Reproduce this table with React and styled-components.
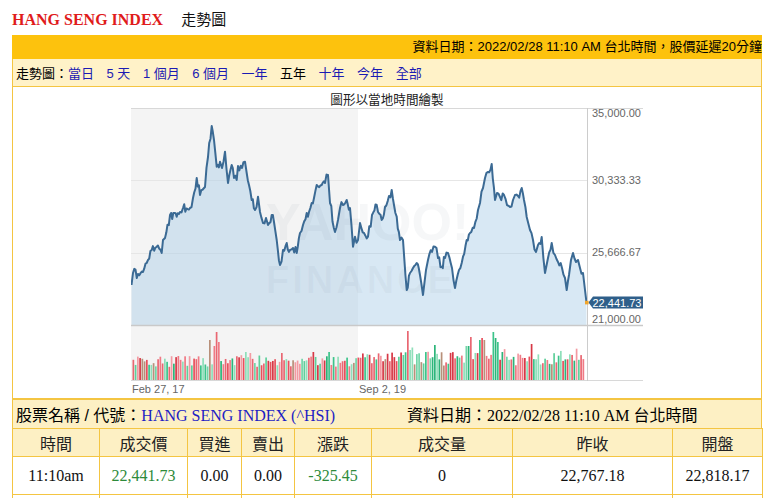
import React from 'react';
import styled, { createGlobalStyle } from 'styled-components';

const SANS = `"Liberation Sans", Arial, "Noto Sans CJK TC", sans-serif`;
const SERIF = `"Liberation Serif", "Times New Roman", "Noto Sans CJK TC", serif`;
const YELLOW = '#f4c542';

const GlobalStyle = createGlobalStyle`
  html, body { margin: 0; padding: 0; background: #fff; }
  body { font-family: ${SANS}; color: #000; }
  #root { width: 768px; height: 498px; overflow: hidden; }
`;

const Page = styled.div`
  padding: 10px 0 0 12px;
  width: 750px;
`;

const TitleRow = styled.div`
  display: flex;
  align-items: baseline;
  gap: 18px;
  height: 25px;
`;

const Title = styled.span`
  font-family: ${SERIF};
  font-weight: bold;
  font-size: 16px;
  line-height: 20px;
  color: #e01b1b;
`;

const Subtitle = styled.span`
  font-size: 15px;
  line-height: 20px;
  color: #111;
`;

const Panel = styled.div`
  width: 750px;
`;

const TopBar = styled.div`
  height: 24px;
  line-height: 24px;
  background: #fdc20d;
  text-align: right;
  font-size: 13px;
  white-space: nowrap;
  overflow: hidden;
`;

const Toolbar = styled.div`
  display: flex;
  align-items: center;
  height: 27px;
  background: #fff2c8;
  border: 1px solid ${YELLOW};
  border-top: none;
  padding-left: 3px;
  font-size: 13px;
  gap: 12.5px;
`;

const ToolLabel = styled.span`
  color: #000;
  margin-right: -12.5px;
`;

const ToolLink = styled.a`
  color: ${(p) => (p.$active ? '#000' : '#1b1bb3')};
  text-decoration: none;
  white-space: pre;
`;

const ChartArea = styled.div`
  display: flex;
  justify-content: center;
  background: #fff;
  border-left: 1px solid ${YELLOW};
  border-right: 1px solid ${YELLOW};
  border-bottom: 2px solid ${YELLOW};
  padding-top: 3px;
  height: 308px;
`;

const InfoRow = styled.div`
  display: grid;
  grid-template-columns: 391px 1fr;
  align-items: center;
  height: 28px;
  background: #fdf0c4;
  border-left: 1px solid ${YELLOW};
  border-right: 1px solid ${YELLOW};
  font-size: 16px;
  white-space: nowrap;
`;

const InfoCell = styled.div`
  padding-left: ${(p) => p.$pad || 3}px;
`;

const SerifBlue = styled.span`
  font-family: ${SERIF};
  color: #1e1ec4;
`;

const SerifText = styled.span`
  font-family: ${SERIF};
`;

const Table = styled.table`
  width: 750px;
  border-collapse: collapse;
  table-layout: fixed;
`;

const Th = styled.th`
  border: 1px solid ${YELLOW};
  background: #fdf0c4;
  font-weight: normal;
  font-size: 16px;
  height: 27px;
  padding: 0;
  color: #222;
  text-align: center;
`;

const Td = styled.td`
  border: 1px solid ${YELLOW};
  background: #fff;
  font-family: ${SERIF};
  font-size: 16px;
  height: ${(p) => p.$h || 37}px;
  padding: 0;
  text-align: center;
  color: ${(p) => (p.$green ? '#2d8a3a' : '#111')};
`;

/* ---------------- chart data ---------------- */

function makeRng(seed) {
  let a = seed;
  return () => {
    a |= 0;
    a = (a + 0x6d2b79f5) | 0;
    let t = Math.imul(a ^ (a >>> 15), 1 | a);
    t = (t + Math.imul(t ^ (t >>> 7), 61 | t)) ^ t;
    return ((t ^ (t >>> 14)) >>> 0) / 4294967296;
  };
}

const KEY = [
  [131.5, 285], [133, 273], [138, 274], [143, 272], [146.7, 263], [151.7, 250], [156.7, 246.7],
  [161.7, 253], [163, 240], [165, 238], [170, 215], [176.7, 216.7], [180, 212], [183, 208],
  [190, 208], [193, 198], [196.7, 178], [200, 195], [205, 187], [208, 157], [211.7, 126],
  [214, 140], [216.7, 166.7], [220, 161.7], [222, 168], [225, 151.7], [228, 183], [231.7, 165],
  [234, 178], [236.7, 180], [238, 166], [242, 168], [245, 161.7], [246.7, 173], [249, 185],
  [251.7, 200], [255, 210], [258, 196.7], [260, 212], [263, 223], [266, 218], [268, 225],
  [271.7, 215], [274, 222], [276.7, 240], [280, 265], [283, 250], [286.7, 243], [290, 250],
  [293, 248], [296.7, 253], [300, 233], [303, 225], [306.7, 213], [309, 212], [311.7, 203],
  [314, 198], [316.7, 185], [321.7, 185], [325, 183], [328, 175], [330, 203], [335, 232],
  [338, 220], [340, 208], [343, 205], [346.7, 200], [350, 208], [353, 246.7], [355, 236.7],
  [358, 240], [360, 223], [364, 233], [368, 236.7], [372, 215], [376.7, 205], [378, 212],
  [381.7, 220], [385, 207], [389, 196], [391.7, 190], [394, 205], [396.7, 216.7], [400, 240],
  [403, 240], [406.7, 290], [410, 273], [413, 268], [416.7, 263], [420, 275], [423, 295],
  [426, 270], [428, 260], [432, 252], [435, 246.7], [438, 258], [441.7, 266.7], [445, 258],
  [448, 253], [452, 268], [455, 288], [459, 270], [463, 256.7], [466.7, 240], [470, 233],
  [474, 228], [478, 210], [480, 203], [483, 188], [485, 178], [488, 172], [491.7, 164],
  [495, 200], [497, 193], [500, 197], [504, 195], [507, 205], [510, 207], [513, 200],
  [515, 195], [518, 196], [521.7, 188], [524, 200], [526.7, 217], [530, 230], [533, 240],
  [536, 252], [538, 245], [541.7, 237], [545, 273], [548, 258], [551.7, 243], [555, 255],
  [558, 262], [562, 268], [565, 278], [566.7, 290], [569, 275], [571, 260], [573, 253],
  [576, 262], [578, 260], [580, 268], [583, 273], [585, 290], [586.5, 302.7],
];

function buildLine() {
  const r = makeRng(7);
  const pts = [];
  for (let i = 0; i < KEY.length; i++) {
    const [x, y] = KEY[i];
    pts.push([x, y]);
    if (i < KEY.length - 1) {
      const [x2, y2] = KEY[i + 1];
      const dx = x2 - x;
      const n = Math.floor(dx / 1.1);
      for (let k = 1; k < n; k++) {
        const t = k / n;
        pts.push([x + dx * t, y + (y2 - y) * t + (r() - 0.5) * 9]);
      }
    }
  }
  return pts;
}

const LINE = buildLine();
const LINE_D = LINE.map((p, i) => `${i ? 'L' : 'M'}${p[0].toFixed(1)},${p[1].toFixed(1)}`).join(' ');
const AREA_D = `${LINE_D} L586.5,325 L131.5,325 Z`;

const SPIKES = [
  [210, 40], [213, 34], [215.7, 48], [218, 38], [244, 28], [250, 27], [281.7, 27], [311.7, 28],
  [328, 28], [403, 25], [406.7, 49], [409, 30], [434, 35], [466.7, 34], [470, 43], [478, 40],
  [481.7, 42], [484, 40], [491.7, 48], [494, 42], [496, 38], [530, 36], [560, 26], [575, 24],
];

const REDS = ['#e8505c', '#f07a85', '#d73846', '#e96772', '#f39aa2'];
const GREENS = ['#3cc48a', '#72d6a8', '#2cb57a', '#5fcf9b', '#8fdfba'];

function buildBars() {
  const r = makeRng(42);
  const bars = [];
  for (let x = 132.5; x <= 584.5; x += 2.25) {
    let h = 13 + r() * 12;
    if (x > 360) h += r() * 8;
    for (const [sx, sh] of SPIKES) {
      if (Math.abs(sx - x) < 1.2) h = Math.max(h, sh);
    }
    const red = r() < 0.52;
    const pal = red ? REDS : GREENS;
    const c = r() < 0.06 ? '#b8907a' : pal[Math.floor(r() * pal.length)];
    bars.push({ x, h, c });
  }
  return bars;
}

const BARS = buildBars();

const ChartSvg = styled.svg`
  display: block;
  font-family: ${SANS};
`;

function Chart() {
  return (
    <ChartSvg width="512" height="306" viewBox="131 90 512 306">
      <text x="387" y="104" fontSize="12.6" textAnchor="middle" fill="#222">圖形以當地時間繪製</text>
      <rect x="131" y="108" width="227" height="272" fill="#f4f4f4" />
      <line x1="131" y1="108.5" x2="643" y2="108.5" stroke="#d8d8d8" />
      <line x1="131" y1="180.5" x2="587" y2="180.5" stroke="#e6e6e6" />
      <line x1="131" y1="253.5" x2="587" y2="253.5" stroke="#e6e6e6" />
      <path d={AREA_D} fill="#a9cbe6" fillOpacity="0.45" />
      <g fill="#6a7f90" fillOpacity="0.06" fontWeight="bold">
        <text x="266" y="240" fontSize="52">YAHOO!</text>
        <text x="266" y="293" fontSize="38" letterSpacing="3">FINANCE</text>
      </g>
      <path d={LINE_D} fill="none" stroke="#3b6a94" strokeWidth="2" strokeLinejoin="round" />
      <line x1="131" y1="325.5" x2="643" y2="325.5" stroke="#c9c9c9" strokeWidth="1.5" />
      {BARS.map((b, i) => (
        <rect key={i} x={b.x} y={380 - b.h} width="1.7" height={b.h} fill={b.c} />
      ))}
      <line x1="131" y1="380.5" x2="643" y2="380.5" stroke="#d8d8d8" />
      <line x1="587.5" y1="108" x2="587.5" y2="381" stroke="#cccccc" />
      <g fontSize="11" fill="#666">
        <text x="592" y="117">35,000.00</text>
        <text x="592" y="184">30,333.33</text>
        <text x="592" y="256">25,666.67</text>
        <text x="592" y="323">21,000.00</text>
        <text x="132" y="393">Feb 27, 17</text>
        <text x="359" y="393">Sep 2, 19</text>
      </g>
      <path d="M588.5,302.5 L593,296.5 L643,296.5 L643,308.5 L593,308.5 Z" fill="#2f5f8a" />
      <text x="592.5" y="306.5" fontSize="11" fill="#fff">22,441.73</text>
      <rect x="585" y="300.8" width="3.6" height="3.6" fill="#f0a52c" />
    </ChartSvg>
  );
}

const LINKS = [
  { t: '當日' },
  { t: '5 天' },
  { t: '1 個月' },
  { t: '6 個月' },
  { t: '一年' },
  { t: '五年', active: true },
  { t: '十年' },
  { t: '今年' },
  { t: '全部' },
];

const COLS = [87, 88, 54, 53, 77, 141, 160, 90];

export default function App() {
  return (
    <>
      <GlobalStyle />
      <Page>
        <TitleRow>
          <Title>HANG SENG INDEX</Title>
          <Subtitle>走勢圖</Subtitle>
        </TitleRow>
        <Panel>
          <TopBar>資料日期：2022/02/28 11:10 AM 台北時間，股價延遲20分鐘</TopBar>
          <Toolbar>
            <ToolLabel>走勢圖：</ToolLabel>
            {LINKS.map((l) => (
              <ToolLink key={l.t} href="#" $active={l.active}>{l.t}</ToolLink>
            ))}
          </Toolbar>
          <ChartArea>
            <Chart />
          </ChartArea>
          <InfoRow>
            <InfoCell>
              股票名稱 / 代號：<SerifBlue>HANG SENG INDEX (^HSI)</SerifBlue>
            </InfoCell>
            <InfoCell $pad={3}>
              資料日期：<SerifText>2022/02/28 11:10 AM </SerifText>台北時間
            </InfoCell>
          </InfoRow>
          <Table>
            <colgroup>
              {COLS.map((w, i) => <col key={i} style={{ width: w }} />)}
            </colgroup>
            <thead>
              <tr>
                <Th>時間</Th>
                <Th>成交價</Th>
                <Th>買進</Th>
                <Th>賣出</Th>
                <Th>漲跌</Th>
                <Th>成交量</Th>
                <Th>昨收</Th>
                <Th>開盤</Th>
              </tr>
            </thead>
            <tbody>
              <tr>
                <Td>11:10am</Td>
                <Td $green>22,441.73</Td>
                <Td>0.00</Td>
                <Td>0.00</Td>
                <Td $green>-325.45</Td>
                <Td>0</Td>
                <Td>22,767.18</Td>
                <Td>22,818.17</Td>
              </tr>
              <tr>
                <Td $h={30}>&nbsp;</Td>
                <Td $h={30}>&nbsp;</Td>
                <Td $h={30}>&nbsp;</Td>
                <Td $h={30}>&nbsp;</Td>
                <Td $h={30}>&nbsp;</Td>
                <Td $h={30}>&nbsp;</Td>
                <Td $h={30}>&nbsp;</Td>
                <Td $h={30}>&nbsp;</Td>
              </tr>
            </tbody>
          </Table>
        </Panel>
      </Page>
    </>
  );
}
